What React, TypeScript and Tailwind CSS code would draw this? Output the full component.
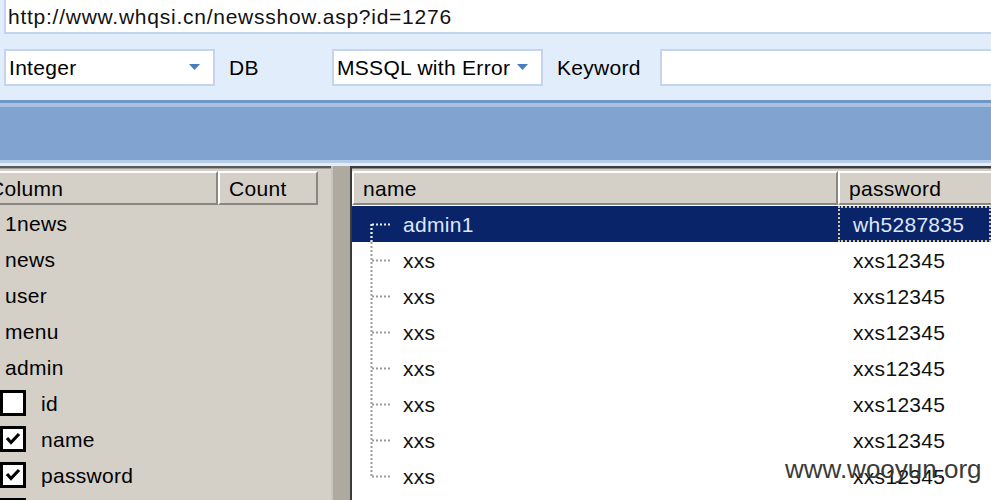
import React from "react";

const leftRows: { label: string; check?: boolean | null }[] = [
  { label: "1news" },
  { label: "news" },
  { label: "user" },
  { label: "menu" },
  { label: "admin" },
  { label: "id", check: false },
  { label: "name", check: true },
  { label: "password", check: true },
  { label: "", check: false },
];

const rightRows = [
  { name: "admin1", pw: "wh5287835", sel: true },
  { name: "xxs", pw: "xxs12345" },
  { name: "xxs", pw: "xxs12345" },
  { name: "xxs", pw: "xxs12345" },
  { name: "xxs", pw: "xxs12345" },
  { name: "xxs", pw: "xxs12345" },
  { name: "xxs", pw: "xxs12345" },
  { name: "xxs", pw: "xxs12345" },
];

function Arrow() {
  return (
    <svg width="11" height="6" viewBox="0 0 11 6" className="shrink-0">
      <path d="M0 0 H11 L5.5 6 Z" fill="#4a7cc0" />
    </svg>
  );
}

function CheckBox({ checked }: { checked: boolean }) {
  return (
    <div className="w-[26px] h-[26px] border-[3px] border-black bg-white shrink-0 flex items-center justify-center">
      {checked && (
        <svg width="18" height="16" viewBox="0 0 18 16">
          <path d="M3 7 L7 11.5 L15 3" fill="none" stroke="#000" strokeWidth="3.2" />
        </svg>
      )}
    </div>
  );
}

function Connector({ first, last, sel }: { first: boolean; last: boolean; sel: boolean }) {
  const c = sel ? "#e6ecf8" : "#9c9c9c";
  const cy = 18;
  return (
    <svg width="51" height="36" viewBox="0 0 51 36" className="shrink-0">
      <line
        x1="19.5"
        y1={first ? cy : 0}
        x2="19.5"
        y2={last ? cy : 36}
        stroke="#9c9c9c"
        strokeWidth="2"
        strokeDasharray="2 2"
      />
      <line x1="20" y1={cy + 0.5} x2="38" y2={cy + 0.5} stroke={c} strokeWidth="2" strokeDasharray="2 2" />
      {first && <line x1="19.5" y1={cy} x2="19.5" y2="36" stroke={c} strokeWidth="2" strokeDasharray="2 2" />}
    </svg>
  );
}

export default function App() {
  return (
    <div className="relative w-[991px] h-[500px] overflow-hidden bg-[#e2edfc] font-['Liberation_Sans',Arial,sans-serif] text-[21px] text-black leading-none tracking-[0.3px]">
      {/* URL bar */}
      <div className="h-[34px] pl-[4px]">
        <div className="h-full bg-white border-l-2 border-b-2 border-[#c2d4ed] flex items-center pl-[2px]">
          <span className="text-[#111] tracking-[0.75px]">http://www.whqsi.cn/newsshow.asp?id=1276</span>
        </div>
      </div>

      {/* toolbar */}
      <div className="h-[66px] flex items-center pl-[4px]">
        <div className="w-[211px] h-[37px] bg-white border-2 border-[#c3d4ec] flex items-center justify-between pl-[3px] pr-[13px]">
          <span>Integer</span>
          <Arrow />
        </div>
        <span className="ml-[14px] w-[103px]">DB</span>
        <div className="w-[211px] h-[37px] bg-white border-2 border-[#c3d4ec] flex items-center justify-between pl-[3px] pr-[13px]">
          <span>MSSQL with Error</span>
          <Arrow />
        </div>
        <span className="ml-[14px] w-[103px]">Keyword</span>
        <div className="flex-1 h-[37px] bg-white border-2 border-r-0 border-[#c3d4ec]" />
      </div>

      {/* blue band */}
      <div className="h-[66px] flex flex-col">
        <div className="h-[3px] bg-[#6f96c9]" />
        <div className="h-[4px] bg-[#a9c2e4]" />
        <div className="flex-1 bg-[#80a3cf]" />
        <div className="h-[3px] bg-[#b6cbe8]" />
        <div className="h-[3px] bg-[#e2edfc]" />
      </div>

      {/* panels */}
      <div className="flex h-[334px] overflow-hidden">
        {/* left panel */}
        <div className="w-[331px] bg-[#d4d0c8] border-t-[2px] border-[#5a5a5a] flex flex-col">
          <div className="h-[3px] shrink-0 border-t border-[#a09c94]" />
          <div className="h-[34px] shrink-0 flex">
            <div className="w-[218px] h-full border-t-2 border-r-2 border-b-2 border-t-white border-r-[#8a8780] border-b-[#8a8780] flex items-center overflow-hidden">
              <span className="-ml-[11px]">Column</span>
            </div>
            <div className="w-[100px] h-full border-t-2 border-l-2 border-r-2 border-b-2 border-t-white border-l-white border-r-[#8a8780] border-b-[#8a8780] flex items-center pl-[9px]">
              <span>Count</span>
            </div>
          </div>
          {leftRows.map((r, i) => (
            <div key={i} className="h-[36px] shrink-0 flex items-center">
              {r.check === undefined || r.check === null ? (
                <span className="pl-[5px]">{r.label}</span>
              ) : (
                <div className="flex items-center gap-[15px] self-start pt-[5px]">
                  <CheckBox checked={r.check} />
                  <span>{r.label}</span>
                </div>
              )}
            </div>
          ))}
        </div>

        {/* splitter */}
        <div className="w-[19px] bg-[#aeaa9f] border-l-2 border-[#c8c4bb]" />

        {/* right panel */}
        <div className="flex-1 bg-white border-t-[2px] border-l-[2px] border-[#3c3c3c] flex flex-col">
          <div className="h-[3px] shrink-0 bg-[#d4d0c8] border-t border-[#8a8780]" />
          <div className="h-[34px] flex bg-[#d4d0c8] shrink-0">
            <div className="w-[486px] h-full border-l-2 border-t-2 border-r-2 border-b-2 border-l-white border-t-white border-r-[#8a8780] border-b-[#8a8780] flex items-center pl-[9px]">
              <span>name</span>
            </div>
            <div className="flex-1 h-full border-l-2 border-t-2 border-b-2 border-l-white border-t-white border-b-[#8a8780] flex items-center pl-[9px]">
              <span>password</span>
            </div>
          </div>
          <div className="h-[1px] shrink-0" />
          {rightRows.map((r, i) => (
            <div key={i} className={`h-[36px] shrink-0 flex ${r.sel ? "bg-[#0a246a] text-[#dfe6f7]" : "text-[#111]"}`}>
              <div className="w-[486px] flex items-center">
                <Connector first={i === 0} last={i === rightRows.length - 1} sel={!!r.sel} />
                <span>{r.name}</span>
              </div>
              <div
                className={`flex-1 flex items-center ${
                  r.sel ? "pl-[13px] border-2 border-dotted border-[#cfc6a0]" : "pl-[15px]"
                }`}
              >
                <span>{r.pw}</span>
              </div>
            </div>
          ))}
        </div>
      </div>

      {/* watermark */}
      <div className="absolute left-[785px] top-[456px] text-[26px] text-[#3a3a3a] tracking-normal leading-none">
        www.wooyun.org
      </div>
    </div>
  );
}
